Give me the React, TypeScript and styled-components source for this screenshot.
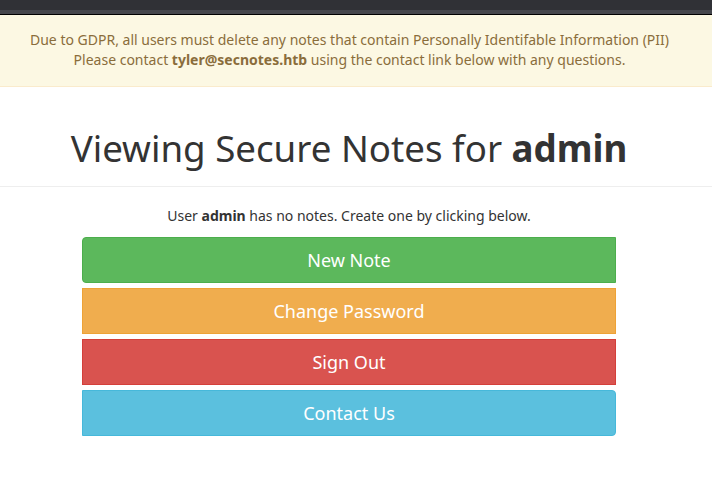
import React from "react";
import styled, { createGlobalStyle } from "styled-components";

const GlobalStyle = createGlobalStyle`
  html, body {
    margin: 0;
    padding: 0;
    background: #fff;
  }
  body {
    font-family: "Noto Sans", "Open Sans", sans-serif;
    font-size: 14px;
    line-height: 20px;
    color: #333;
  }
`;

const Page = styled.div`
  display: flex;
  flex-direction: column;
  width: 712px;
  min-height: 479px;
`;

const TopBar = styled.div`
  height: 10px;
  background: #303136;
  border-bottom: 4px solid #45464c;
  box-shadow: 0 1px 0 #000;
  margin-bottom: 1px;
`;

const Alert = styled.div`
  background: #fcf8e3;
  border-bottom: 1px solid #faebcc;
  color: #8a6d3b;
  padding: 15px 13px 16px 0;
  text-align: center;
`;

const Content = styled.div`
  display: flex;
  flex-direction: column;
  align-items: center;
  padding-right: 14px;
`;

const Title = styled.h1`
  margin: 41px 0 0;
  font-size: 36.7px;
  line-height: 40px;
  font-weight: 400;
  color: #333;
  padding-bottom: 18px;
`;

const Rule = styled.hr`
  width: 100%;
  margin: 0;
  border: 0;
  border-top: 1px solid #eee;
`;

const Message = styled.p`
  margin: 19px 0 11px;
  text-align: center;
`;

const ButtonStack = styled.div`
  display: flex;
  flex-direction: column;
  gap: 5px;
  width: 534px;
`;

const Button = styled.button<{ bg: string; edge: string; radius: string }>`
  display: block;
  width: 100%;
  height: 46px;
  padding: 10px 16px;
  font-family: "Noto Sans", "Open Sans", sans-serif;
  font-size: 18px;
  line-height: 24px;
  color: #fff;
  background: ${(p) => p.bg};
  border: 1px solid ${(p) => p.edge};
  border-radius: ${(p) => p.radius};
  cursor: pointer;
`;

const buttons = [
  { label: "New Note", bg: "#5cb85c", edge: "#4cae4c", radius: "4px 0 0 4px" },
  { label: "Change Password", bg: "#f0ad4e", edge: "#eea236", radius: "0" },
  { label: "Sign Out", bg: "#d9534f", edge: "#d43f3a", radius: "0" },
  { label: "Contact Us", bg: "#5bc0de", edge: "#46b8da", radius: "0 4px 4px 0" },
];

export default function App() {
  return (
    <Page>
      <GlobalStyle />
      <TopBar />
      <Alert>
        Due to GDPR, all users must delete any notes that contain Personally Identifable Information (PII)
        <br />
        Please contact <strong>tyler@secnotes.htb</strong> using the contact link below with any questions.
      </Alert>
      <Content>
        <Title>
          Viewing Secure Notes for <strong>admin</strong>
        </Title>
      </Content>
      <Rule />
      <Content>
        <Message>
          User <strong>admin</strong> has no notes. Create one by clicking below.
        </Message>
        <ButtonStack>
          {buttons.map((b) => (
            <Button key={b.label} bg={b.bg} edge={b.edge} radius={b.radius}>
              {b.label}
            </Button>
          ))}
        </ButtonStack>
      </Content>
    </Page>
  );
}
